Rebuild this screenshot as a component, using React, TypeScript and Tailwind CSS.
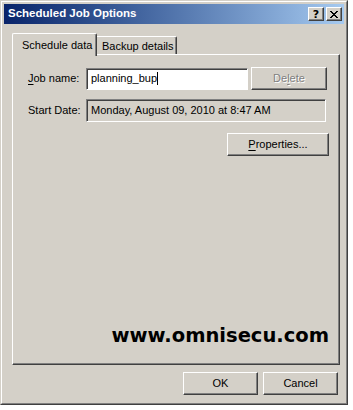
import React from "react";

const btn =
  "flex items-center justify-center bg-[#d4d0c8] border border-t-white border-l-white border-r-[#404040] border-b-[#404040] shadow-[inset_-1px_-1px_0_#808080]";
const sunken =
  "flex items-center border border-t-[#808080] border-l-[#808080] border-r-white border-b-white shadow-[inset_1px_1px_0_#404040]";

export default function App() {
  return (
    <div
      className="w-[353px] h-[410px] bg-white text-black text-[11px]"
      style={{ fontFamily: '"Liberation Sans", Arial, sans-serif' }}
    >
      <div className="w-[348px] h-[405px] border border-t-[#d4d0c8] border-l-[#d4d0c8] border-r-[#404040] border-b-[#404040] bg-[#d4d0c8]">
        <div className="w-full h-full border border-t-white border-l-white border-r-[#808080] border-b-[#808080] p-[2px] flex flex-col">
          {/* Title bar */}
          <div className="h-[20px] flex items-center justify-between pl-[4px] pr-[2px] bg-gradient-to-r from-[#0a246a] to-[#a6caf0]">
            <span className="text-white font-bold text-[11.5px]">Scheduled Job Options</span>
            <div className="flex gap-[2px]">
              <div className={`${btn} w-[16px] h-[14px]`}>
                <span className="font-bold text-[11px] leading-none mt-[1px]" style={{ fontFamily: '"DejaVu Sans", sans-serif' }}>?</span>
              </div>
              <div className={`${btn} w-[16px] h-[14px]`}>
                <svg width="8" height="7" viewBox="0 0 8 7" shapeRendering="crispEdges">
                  <path
                    d="M0 0h2v1h-2zM6 0h2v1h-2zM1 1h2v1h-2zM5 1h2v1h-2zM2 2h4v1h-4zM3 3h2v1h-2zM2 4h4v1h-4zM1 5h2v1h-2zM5 5h2v1h-2zM0 6h2v1h-2zM6 6h2v1h-2z"
                    fill="#000"
                  />
                </svg>
              </div>
            </div>
          </div>

          {/* Tabs */}
          <div className="ml-[8px] w-[328px] flex flex-col">
            <div className="mt-[9px] h-[21px] flex items-end">
              <div className="relative z-10 w-[85px] h-[23px] -mb-[2px] bg-[#d4d0c8] border-t border-l border-t-white border-l-white border-r border-r-[#404040] shadow-[inset_-1px_0_0_#808080] rounded-tl-[2px] rounded-tr-[2px] pl-[9px] pt-[3px]">
                Schedule data
              </div>
              <div className="w-[80px] h-[18px] bg-[#d4d0c8] border-t border-t-white border-r border-r-[#404040] shadow-[inset_-1px_0_0_#808080] rounded-tr-[2px] pl-[5px] pt-[1px]">
                Backup details
              </div>
            </div>

            {/* Panel */}
            <div className="h-[311px] border border-t-white border-l-white border-r-[#404040] border-b-[#404040] shadow-[inset_-1px_-1px_0_#808080] flex flex-col pl-[15px] pr-[10px]">
              <div className="mt-[12px] flex items-center">
                <span className="w-[58px]">
                  <span className="underline underline-offset-2">J</span>ob name:
                </span>
                <div className={`${sunken} w-[162px] h-[22px] bg-white pl-[4px]`}>
                  <span>planning_bup</span>
                  <span className="w-[1px] h-[13px] bg-black" />
                </div>
                <div className={`${btn} ml-[3px] w-[76px] h-[23px] text-[#808080] [text-shadow:1px_1px_0_#fff]`}>
                  <span>
                    De<span className="underline underline-offset-2">l</span>ete
                  </span>
                </div>
              </div>

              <div className="mt-[9px] flex items-center">
                <span className="w-[58px]">Start Date:</span>
                <div className={`${sunken} w-[240px] h-[23px] pl-[4px]`}>
                  Monday, August 09, 2010 at 8:47 AM
                </div>
              </div>

              <div className="mt-[11px] flex justify-end">
                <div className={`${btn} w-[102px] h-[23px]`}>
                  <span>
                    <span className="underline underline-offset-2">P</span>roperties...
                  </span>
                </div>
              </div>

              <div className="mt-auto mb-[19px] flex justify-end">
                <span
                  className="font-bold text-[19.5px] leading-none"
                  style={{ fontFamily: '"DejaVu Sans", Verdana, sans-serif' }}
                >
                  www.omnisecu.com
                </span>
              </div>
            </div>
          </div>

          {/* Bottom buttons */}
          <div className="mt-[7px] mr-[6px] flex justify-end gap-[5px]">
            <div className={`${btn} w-[75px] h-[23px]`}>OK</div>
            <div className={`${btn} w-[75px] h-[23px]`}>Cancel</div>
          </div>
        </div>
      </div>
    </div>
  );
}
